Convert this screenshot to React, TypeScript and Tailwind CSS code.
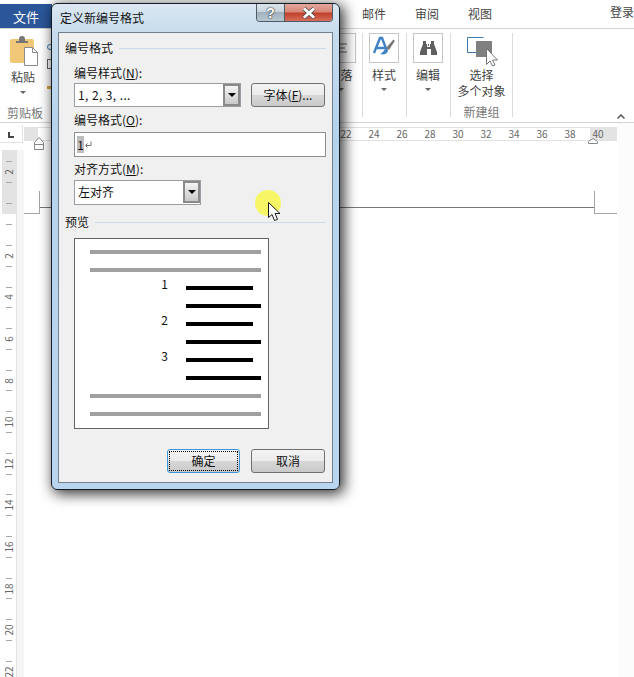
const rulerNums = [22, 24, 26, 28, 30, 32, 34, 36, 38, 40];
const sideNums = [2, 4, 6, 8, 10, 12, 14, 16, 18, 20, 22];
const barRows = [
  { num: '1', short: true },
  { num: '', short: false },
  { num: '2', short: true },
  { num: '', short: false },
  { num: '3', short: true },
  { num: '', short: false },
];

function SmallArrow() {
  return <span className="h-0 w-0 border-x-[3px] border-t-[3px] border-x-transparent border-t-[#666]" />;
}

function PasteIcon() {
  return (
    <svg width="30" height="31" viewBox="0 0 30 31">
      <rect x="0" y="3" width="24" height="24" rx="2" fill="#f0c878" />
      <path d="M6 6V4h3V2a2 2 0 0 1 6 0v2h3v2z" fill="#777" transform="translate(0 1)" />
      <path d="M14.500 11.500h8l5 5v13h-13z" fill="#fff" stroke="#8a8a8a" />
      <path d="M22.500 11.500v5h5" fill="none" stroke="#8a8a8a" />
    </svg>
  );
}

function StyleIcon() {
  return (
    <svg width="24" height="24" viewBox="0 0 24 24">
      <path d="M2 17 8 2h2l5 13M5 12h8" fill="none" stroke="#3f83c4" strokeWidth="2.400" />
      <path d="M21 4c1-.5 2 .5 1.500 1.500L17 14l-3-2z" fill="#777" />
      <path d="M13 13l3 2c-1 3-4 4-8 3 2-1 3-2 5-5z" fill="#3f83c4" />
    </svg>
  );
}

function BinocularsIcon() {
  return (
    <svg width="17" height="14" viewBox="0 0 17 14">
      <path d="M3 0h3v3h1v3h3V3h1V0h3v3l3 8v3h-6V8H7v6H0v-3l3-8z" fill="#5f5f5f" />
      <path d="M8 3h1v2H8z" fill="#5f5f5f" />
    </svg>
  );
}

function SelectIcon() {
  return (
    <svg width="31" height="30" viewBox="0 0 31 30">
      <path d="M16.500 0.500H0.500v15h9" fill="none" stroke="#3f78b5" />
      <rect x="9" y="4" width="16" height="16" fill="#808080" />
      <path d="M19.500 11.500v16l3.500-3.500 2.500 5 2.500-1-2.500-5h5z" fill="#fff" stroke="#777" />
    </svg>
  );
}

function CursorArrow() {
  return (
    <svg width="14" height="20" viewBox="0 0 14 20">
      <path d="M0.500 0.500v15l3.500-3 2.500 6 3-1.200-2.500-5.800h5z" fill="#fff" stroke="#1a1a1a" />
    </svg>
  );
}

function RibbonGroup({ label, arrow, width, children }: { label: string; arrow?: boolean; width: string; children: React.ReactNode }) {
  return (
    <div className={`flex h-[84px] flex-col items-center border-r border-[#dcdcdc] pr-[1px] ${width}`}>
      <div className="flex h-[30px] w-[30px] items-center justify-center border border-[#c6c6c6]">{children}</div>
      <span className="mt-[4px] text-xs leading-[16px] text-[#444]">{label}</span>
      {arrow ? <span className="mt-[5px] flex"><SmallArrow /></span> : null}
    </div>
  );
}

function ComboArrow() {
  return (
    <span className="flex h-full w-[17px] items-center justify-center border-2 border-[#8a8a8a] bg-gradient-to-b from-[#f4f4f4] to-[#c9c9c9]">
      <span className="h-0 w-0 border-x-[4px] border-t-[4px] border-x-transparent border-t-black" />
    </span>
  );
}

function DialogButton({ children, focused }: { children: React.ReactNode; focused?: boolean }) {
  return (
    <button
      className={`flex h-[24px] items-center justify-center rounded-[3px] border bg-[linear-gradient(#f3f3f3_0%,#ececec_48%,#d8d8d8_50%,#c9c9c9_100%)] text-xs leading-none text-[#111] ${
        focused ? 'w-[73px] border-[#3a97d8] p-[1px]' : 'w-[74px] border-[#707070]'
      }`}
    >
      {focused ? (
        <span className="flex h-full w-full items-center justify-center border border-dotted border-black">{children}</span>
      ) : (
        children
      )}
    </button>
  );
}

function GroupTitle({ text, top }: { text: string; top: string }) {
  return (
    <div className={`flex h-[14px] items-center gap-[6px] pl-[6px] pr-[6px] ${top}`}>
      <span className="text-xs leading-[14px] text-[#111]">{text}</span>
      <span className="h-px flex-1 bg-[#c9dcee]" />
    </div>
  );
}

function FieldLabel({ text, hot, top }: { text: string; hot: string; top: string }) {
  return (
    <div className={`h-[16px] pl-[15px] text-xs leading-[16px] text-[#111] ${top}`}>
      {text}(<span className="underline">{hot}</span>):
    </div>
  );
}

function NumberDialog() {
  return (
    <div className="absolute left-[51px] top-[3px] flex h-[487px] w-[289px] flex-col rounded-[6px] border border-[#141c24] bg-[linear-gradient(#dbe7f2_0px,#c6dbed_30px,#b6d3ee_120px,#bad5ef_100%)] px-[6px] pb-[6px] shadow-[3px_3px_14px_1px_rgba(0,0,0,0.8)]">
      <div className="flex h-[28px] shrink-0">
        <span className="self-center pl-[2px] text-xs leading-none text-[#111]">定义新编号格式</span>
        <div className="ml-auto flex h-[18px] overflow-hidden rounded-b-[4px] border border-t-0 border-[#4d5b68]">
          <span className="flex w-[28px] items-center justify-center border-r border-[#4d5b68] bg-[linear-gradient(#dbe4ea_0%,#c9d4dc_45%,#9fb0bd_50%,#b9c7d1_100%)] font-['Liberation_Sans',sans-serif] text-[14px] font-bold leading-[16px] text-white [text-shadow:0_0_2px_#222,0_0_1px_#222]">
            ?
          </span>
          <span className="flex w-[47px] items-center justify-center bg-[linear-gradient(#e3a79c_0%,#d78878_45%,#c2402a_55%,#d5705c_100%)]">
            <svg width="16" height="12" viewBox="0 0 16 12">
              <path d="M3 1.500l10 9M13 1.500l-10 9" fill="none" stroke="#39424a" strokeWidth="4.200" />
              <path d="M3 1.500l10 9M13 1.500l-10 9" fill="none" stroke="#fff" strokeWidth="3" />
            </svg>
          </span>
        </div>
      </div>

      <div className="flex flex-1 flex-col border border-[#72818f] bg-[#f0f0f0]">
        <GroupTitle text="编号格式" top="mt-[8px]" />
        <FieldLabel text="编号样式" hot="N" top="mt-[10px]" />
        <div className="mt-[2px] flex pl-[15px]">
          <div className="flex h-[24px] w-[167px] items-center border border-[#9c9ca4] bg-white pl-[3px] pr-0">
            <span className="text-xs leading-none tracking-[0.4px] text-[#111]">1, 2, 3, ...</span>
            <span className="ml-auto h-full"><ComboArrow /></span>
          </div>
          <span className="ml-[10px]"><DialogButton>字体(<span className="underline">F</span>)...</DialogButton></span>
        </div>
        <FieldLabel text="编号格式" hot="O" top="mt-[5px]" />
        <div className="ml-[15px] mt-[4px] flex h-[25px] w-[252px] items-center border border-[#8e8f8f] bg-white pl-[2px]">
          <span className="flex h-[17px] w-[7px] items-center justify-center bg-[#bdbdbd] text-xs leading-none text-[#111]">1</span>
          <svg width="8" height="8" viewBox="0 0 8 8">
            <path d="M7 0.500v4H1.500M3.500 2.500l-2 2 2 2" fill="none" stroke="#777" />
          </svg>
        </div>
        <FieldLabel text="对齐方式" hot="M" top="mt-[4px]" />
        <div className="ml-[15px] mt-[3px] flex h-[25px] w-[127px] items-center border border-[#9c9ca4] bg-white pb-[1px] pl-[3px]">
          <span className="text-xs leading-none text-[#111]">左对齐</span>
          <span className="ml-auto h-full"><ComboArrow /></span>
        </div>
        <GroupTitle text="预览" top="mt-[10px]" />

        <div className="ml-[15px] mt-[9px] flex h-[191px] w-[195px] flex-col gap-[14px] border border-[#646464] bg-white pl-[15px] pt-[11px]">
          <div className="h-[4px] w-[171px] shrink-0 bg-[#a0a0a0]" />
          <div className="h-[4px] w-[171px] shrink-0 bg-[#a0a0a0]" />
          {barRows.map((row, i) => (
            <div key={i} className="flex h-[4px] shrink-0 items-center">
              <span className="mb-[8px] w-[78px] text-right text-xs leading-[12px] text-[#111]">{row.num}</span>
              <span className={`ml-[18px] h-[4px] bg-black ${row.short ? 'w-[67px]' : 'w-[75px]'}`} />
            </div>
          ))}
          <div className="h-[4px] w-[171px] shrink-0 bg-[#a0a0a0]" />
          <div className="h-[4px] w-[171px] shrink-0 bg-[#a0a0a0]" />
        </div>

        <div className="mt-[20px] flex pl-[108px]">
          <DialogButton focused>确定</DialogButton>
          <span className="ml-[11px]"><DialogButton>取消</DialogButton></span>
        </div>
      </div>
    </div>
  );
}

export default function App() {
  return (
    <div className="relative flex h-[677px] w-[634px] flex-col overflow-hidden bg-white font-['Noto_Sans_CJK_SC','Noto_Sans',sans-serif]">
      {/* tabs */}
      <div className="flex h-[29px] shrink-0 items-end border-b border-[#d4d4d4] text-xs text-[#444]">
        <span className="flex h-[24px] w-[52px] items-center justify-center bg-[#2b579a] text-[13px] leading-none text-white">文件</span>
        <div className="ml-[310px] flex h-[28px] items-center gap-[29px]">
          <span>邮件</span>
          <span>审阅</span>
          <span>视图</span>
        </div>
        <span className="mb-[10px] ml-auto leading-none">登录</span>
      </div>

      {/* ribbon */}
      <div className="flex h-[94px] shrink-0 items-start border-b border-[#d4d4d4] pt-[4px]">
        <div className="flex h-[84px] w-[46px] shrink-0 flex-col items-center text-xs text-[#444]">
          <span className="ml-[4px] mt-[3px] flex"><PasteIcon /></span>
          <span className="mt-[2px] leading-[16px]">粘贴</span>
          <span className="mt-[6px] flex"><SmallArrow /></span>
          <span className="ml-[4px] mt-[12px] leading-[14px] text-[#777]">剪贴板</span>
        </div>
        {/* edges of the small paste icons, mostly under the dialog */}
        <div className="flex w-[6px] shrink-0 flex-col pl-[1px]">
          <span className="mt-[11px] h-[6px] w-[6px] rounded-full border border-[#3f78b5]" />
          <span className="mt-[9px] h-[10px] w-[6px] border border-[#666]" />
          <span className="mt-[17px] h-[3px] w-[4px] bg-[#d9a441]" />
        </div>
        <div className="ml-[268px] flex">
          <RibbonGroup label="段落" arrow width="w-[43px]">
            <svg width="12" height="10" viewBox="0 0 12 10">
              <path d="M0 1h12M2 5h8M0 9h12" stroke="#666" />
            </svg>
          </RibbonGroup>
          <RibbonGroup label="样式" arrow width="w-[44px]"><StyleIcon /></RibbonGroup>
          <RibbonGroup label="编辑" arrow width="w-[44px]"><BinocularsIcon /></RibbonGroup>
          <div className="flex h-[84px] w-[62px] flex-col items-center border-r border-[#dcdcdc] text-xs text-[#444]">
            <span className="ml-[2px] mt-[4px] flex"><SelectIcon /></span>
            <span className="leading-[16px]">选择</span>
            <span className="leading-[16px]">多个对象</span>
            <span className="mt-[6px] leading-[14px] text-[#777]">新建组</span>
          </div>
        </div>
        <svg className="ml-auto mr-[9px] mt-[81px]" width="8" height="5" viewBox="0 0 8 5">
          <path d="M0.500 4.500 4 1l3.500 3.500" fill="none" stroke="#555" strokeWidth="1.500" />
        </svg>
      </div>

      {/* document area */}
      <div className="flex min-h-0 flex-1">
        <div className="flex w-[24px] shrink-0 flex-col">
          <div className="flex h-[27px] shrink-0 items-start">
            <span className="mt-[2px] flex h-[18px] w-[23px] items-center justify-center border-b border-r border-[#e2e2e2] pt-[3px]">
              <span className="h-[6px] w-[6px] border-b-2 border-l-2 border-[#444]" />
            </span>
          </div>
          <div className="flex min-h-0 flex-1">
            <div className="w-[17px] shrink-0 pl-[2px]">
              <div className="flex w-[15px] flex-col border-r border-[#e4e4e4] text-[10px] leading-none text-[#666]">
                <div className="flex h-[64px] flex-col justify-end bg-[#e3e3e3]">
                  <div className="flex h-[41.600px] shrink-0 flex-col items-center justify-center gap-[4.900px]">
                    <span className="h-px w-[6px] bg-[#a8a8a8]" />
                    <span className="flex h-[10px] -rotate-90 items-center">2</span>
                    <span className="h-px w-[6px] bg-[#a8a8a8]" />
                  </div>
                  <div className="flex h-[21px] shrink-0 items-center justify-center">
                    <span className="h-px w-[6px] bg-[#a8a8a8]" />
                  </div>
                </div>
                <div className="flex h-[21px] items-center justify-center">
                  <span className="h-px w-[6px] bg-[#a8a8a8]" />
                </div>
                {sideNums.map((n) => (
                  <div key={n} className="flex h-[41.600px] shrink-0 flex-col items-center justify-center gap-[4.900px]">
                    <span className="h-px w-[6px] bg-[#a8a8a8]" />
                    <span className="flex h-[10px] -rotate-90 items-center">{n}</span>
                    <span className="h-px w-[6px] bg-[#a8a8a8]" />
                  </div>
                ))}
              </div>
            </div>
            <div className="w-[7px] bg-[#f5f5f5]" />
          </div>
        </div>

        <div className="w-[593px] shrink-0 pt-[4px]">
          <div className="relative h-[14px] bg-[#e3e3e3] pl-[14px]">
            <div className="flex h-[14px] w-[552px] items-center border-y border-[#e2e2e2] bg-white pl-[294px] text-[10px] leading-none text-[#666]">
              {rulerNums.map((n) => (
                <span key={n} className="w-[28px] shrink-0 text-center">{n}</span>
              ))}
            </div>
            <svg className="absolute left-[10px] top-[10px]" width="10" height="13" viewBox="0 0 10 13">
              <path d="M0.500 12.500V5.500L5 0.500l4.500 5v7z M0.500 7.500h9" fill="#fff" stroke="#888" />
            </svg>
            <svg className="absolute left-[564px] top-[11px]" width="10" height="6" viewBox="0 0 10 6">
              <path d="M0.500 5.500V3.500L5 0.500 9.500 3.500v2z" fill="#fff" stroke="#888" />
            </svg>
          </div>
          <div className="mt-[50px] flex items-start">
            <div className="h-[23px] w-[16px] shrink-0 border-b border-r border-[#a5a5a5]" />
            <div className="h-[17px] flex-1 border-b border-[#777]" />
            <div className="h-[23px] w-[23px] shrink-0 border-b border-l border-[#a5a5a5]" />
          </div>
        </div>
        <div className="flex-1 bg-[#fcfcfc]" />
      </div>

      <NumberDialog />

      {/* mouse highlight */}
      <div className="absolute left-[255px] top-[190px] h-[26px] w-[26px] rounded-full bg-[#f7f765]" />
      <div className="absolute left-[268px] top-[202px] flex"><CursorArrow /></div>
    </div>
  );
}
